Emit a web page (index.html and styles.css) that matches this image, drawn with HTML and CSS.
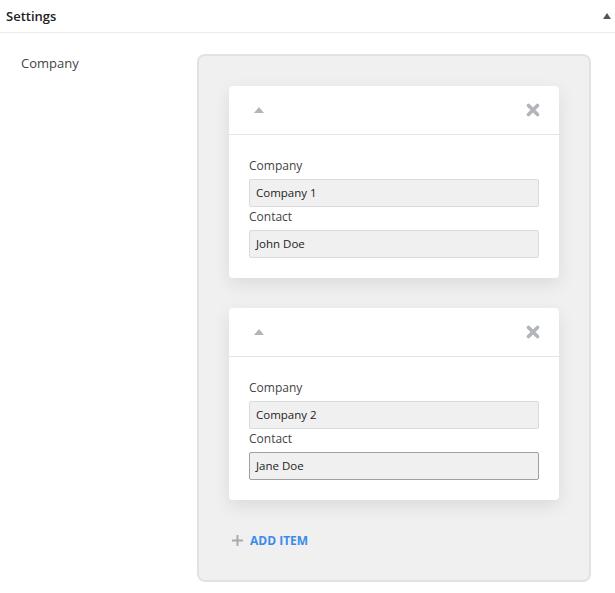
FILE: index.html
```html
<!DOCTYPE html>
<html>
<head>
<meta charset="utf-8">
<link rel="stylesheet" href="styles.css">
</head>
<body>
<div class="panel">
  <div class="panel-head">
    <span class="panel-title">Settings</span>
    <span class="tri tri-dark"></span>
  </div>
  <div class="row">
    <div class="row-label">Company</div>
    <div class="repeater">
      <div class="card">
        <div class="card-head">
          <span class="tri tri-light"></span>
          <svg class="x" width="14" height="14" viewBox="0 0 14 14"><path d="M2.5 2.5 L11.5 11.5 M11.5 2.5 L2.5 11.5" stroke="#b2b5ba" stroke-width="3.6" stroke-linecap="round"/></svg>
        </div>
        <div class="card-body">
          <label class="f-label">Company</label>
          <div class="input">Company 1</div>
          <label class="f-label">Contact</label>
          <div class="input">John Doe</div>
        </div>
      </div>
      <div class="card">
        <div class="card-head">
          <span class="tri tri-light"></span>
          <svg class="x" width="14" height="14" viewBox="0 0 14 14"><path d="M2.5 2.5 L11.5 11.5 M11.5 2.5 L2.5 11.5" stroke="#b2b5ba" stroke-width="3.6" stroke-linecap="round"/></svg>
        </div>
        <div class="card-body">
          <label class="f-label">Company</label>
          <div class="input">Company 2</div>
          <label class="f-label">Contact</label>
          <div class="input focus">Jane Doe</div>
        </div>
      </div>
      <div class="add">
        <svg width="11" height="11" viewBox="0 0 11 11"><path d="M5.5 0 V11 M0 5.5 H11" stroke="#aaaaaa" stroke-width="2"/></svg>
        <span>ADD ITEM</span>
      </div>
    </div>
  </div>
</div>
</body>
</html>
```

FILE: styles.css
```css
html, body {
  margin: 0;
  padding: 0;
  background: #ffffff;
}
body {
  font-family: "Open Sans", "Segoe UI", sans-serif;
  color: #3c3c3c;
  font-size: 13px;
}
.panel-head {
  height: 33px;
  border-bottom: 1px solid #ebebeb;
  display: flex;
  align-items: center;
  justify-content: space-between;
  padding: 0 4px 0 6px;
  box-sizing: border-box;
}
.panel-title {
  font-size: 13px;
  font-weight: 600;
  color: #222;
}
.tri {
  display: inline-block;
  width: 0;
  height: 0;
  border-left: 4px solid transparent;
  border-right: 4px solid transparent;
}
.tri-dark {
  border-bottom: 6px solid #555;
}
.tri-light {
  border-left-width: 5px;
  border-right-width: 5px;
  border-bottom: 6px solid #b4b4b4;
}
.row {
  display: flex;
  padding-top: 21px;
}
.row-label {
  width: 176px;
  padding-left: 21px;
  font-size: 13px;
  color: #444;
  line-height: 18px;
  margin-top: 0;
}
.repeater {
  width: 394px;
  box-sizing: border-box;
  background: #f0f0f0;
  border: 2px solid #e2e2e2;
  border-radius: 8px;
  padding: 30px 30px 0 30px;
  height: 528px;
  display: flex;
  flex-direction: column;
  gap: 30px;
}
.card {
  background: #fff;
  border-radius: 4px;
  box-shadow: 0 6px 18px rgba(0,0,0,0.09);
}
.card-head {
  height: 48px;
  border-bottom: 1px solid #e4e4e4;
  display: flex;
  align-items: center;
  justify-content: space-between;
  padding: 0 19px 0 25px;
}
.card-body {
  padding: 22px 20px 20px 20px;
  display: flex;
  flex-direction: column;
}
.f-label {
  font-size: 12px;
  color: #444;
  line-height: 17px;
  margin-bottom: 5px;
}
.input {
  height: 28px;
  box-sizing: border-box;
  background: #f0f0f0;
  border: 1px solid #dadada;
  border-radius: 2px;
  font-size: 11.5px;
  color: #222;
  line-height: 26px;
  padding-left: 6px;
  margin-bottom: 1px;
}
.input.focus {
  border-color: #a0a0a0;
}
.input:last-child {
  margin-bottom: 0;
}
.add {
  display: flex;
  align-items: center;
  gap: 7px;
  padding-left: 3px;
  margin-top: 2px;
}
.add span {
  font-size: 12px;
  font-weight: 700;
  color: #3b8bea;
}
```
